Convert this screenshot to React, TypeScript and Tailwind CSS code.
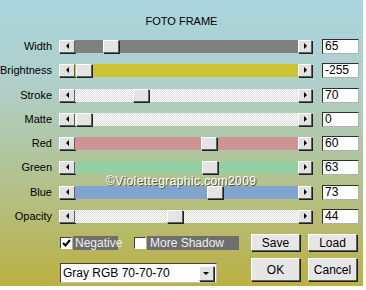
import React from "react";

type Row = { label: string; value: string; thumb: number; track: string };

// thumb = left offset of the thumb inside the track area (px)
const rows: Row[] = [
	{ label: "Width", value: "65", thumb: 28, track: "bg-[#808080]" },
	{ label: "Brightness", value: "-255", thumb: 1, track: "bg-[#cdc431]" },
	{ label: "Stroke", value: "70", thumb: 58, track: "dither" },
	{ label: "Matte", value: "0", thumb: 1, track: "dither" },
	{ label: "Red", value: "60", thumb: 126, track: "bg-[#cc9494]" },
	{ label: "Green", value: "63", thumb: 127, track: "bg-[#94d0a4]" },
	{ label: "Blue", value: "73", thumb: 132, track: "bg-[#80a4cc]" },
	{ label: "Opacity", value: "44", thumb: 92, track: "dither" },
];

const raised = "border border-t-white border-l-white border-r-[#606060] border-b-[#606060] shadow-[1px_1px_0_#202020]";

function Arrow({ dir }: { dir: "left" | "right" | "down" }) {
	const pts = dir === "left" ? "4,0 4,6 1,3" : dir === "right" ? "1,0 1,6 4,3" : "0,1 6,1 3,4";
	return (
		<svg width={dir === "down" ? 7 : 5} height={dir === "down" ? 5 : 7} viewBox={dir === "down" ? "0 0 7 5" : "0 0 5 7"}>
			<polygon points={pts} fill="#000" />
		</svg>
	);
}

function Slider({ row }: { row: Row }) {
	const dither = row.track === "dither";
	return (
		<div className="flex h-[13px] w-[253px]">
			<div className={`flex h-[13px] w-[16px] shrink-0 items-center justify-center bg-[#e2e2e2] ${raised}`}>
				<Arrow dir="left" />
			</div>
			<div
				className={`relative h-[13px] flex-1 ${
					dither ? "bg-[repeating-conic-gradient(#dcdcdc_0_25%,#ffffff_0_50%)] bg-[length:2px_2px]" : row.track
				}`}
			>
				<div className={`absolute top-0 h-[13px] w-[16px] bg-[#e4e4e4] ${raised}`} style={{ left: row.thumb }} />
			</div>
			<div className={`flex h-[13px] w-[14px] shrink-0 items-center justify-center bg-[#e2e2e2] ${raised}`}>
				<Arrow dir="right" />
			</div>
		</div>
	);
}

function Button({ label, tall }: { label: string; tall?: boolean }) {
	return (
		<div
			className={`flex w-[49px] items-center justify-center bg-[#e6e6e6] text-[12px] text-black ${raised} ${
				tall ? "h-[23px]" : "h-[17px]"
			}`}
		>
			{label}
		</div>
	);
}

export default function App() {
	return (
		<div className="h-[290px] w-[366px] bg-white font-['Liberation_Sans',Arial,sans-serif]">
			<div className="relative flex h-[286px] w-[363px] flex-col bg-[linear-gradient(to_bottom,#a9d6de_0%,#b0cfc8_30%,#b1c59d_55%,#b6bb70_78%,#bbb042_100%)]">
				<div className="pt-[15px] text-center text-[11px] leading-[13px] text-black">FOTO FRAME</div>

				<div className="mt-[12px] flex flex-col gap-[11.3px]">
					{rows.map((row) => (
						<div key={row.label} className="flex h-[13px] items-center">
							<div className="w-[53px] pr-[1px] text-right text-[11px] leading-[13px] text-black">{row.label}</div>
							<div className="ml-[6px]">
								<Slider row={row} />
							</div>
							<div className="ml-[10px] flex h-[15px] w-[37px] items-center border border-t-[#303030] border-l-[#303030] border-r-[#b0b0b0] border-b-[#b0b0b0] bg-white pl-[2px] text-[12px] leading-[13px] text-black">
								{row.value}
							</div>
						</div>
					))}
				</div>

				<div className="mt-[11px] flex">
					<div className="ml-[60px] flex w-[191px] shrink-0 flex-col">
						<div className="mt-[2px] flex h-[14px] items-center">
							<div className="flex h-[12px] w-[12px] items-center justify-center border border-t-[#404040] border-l-[#404040] border-r-white border-b-white bg-white">
								<svg width="9" height="8" viewBox="0 0 9 8">
									<polyline points="1,4 3.5,6.5 8,1" fill="none" stroke="#000" strokeWidth="2" />
								</svg>
							</div>
							<div className="ml-[1px] flex h-[14px] w-[45px] items-center bg-[#6e6e6e] pl-[2px] text-[12px] text-[#eeeeee]">
								Negative
							</div>
							<div className="ml-[16px] h-[12px] w-[12px] border border-t-[#404040] border-l-[#404040] border-r-white border-b-white bg-white" />
							<div className="ml-[1px] flex h-[14px] w-[92px] items-center bg-[#6e6e6e] pl-[3px] text-[12px] text-[#eeeeee]">
								More Shadow
							</div>
						</div>
						<div className="mt-[13px] flex h-[20px] w-[157px] items-center border border-t-[#404040] border-l-[#404040] border-r-[#c0c0c0] border-b-[#c0c0c0] bg-white pl-[2px]">
							<span className="flex-1 text-[12px] text-black">Gray RGB 70-70-70</span>
							<div className={`mr-[2px] flex h-[15px] w-[15px] items-center justify-center bg-[#e2e2e2] ${raised}`}>
								<Arrow dir="down" />
							</div>
						</div>
					</div>
					<div className="flex flex-col">
						<div className="flex gap-[8px]">
							<Button label="Save" />
							<Button label="Load" />
						</div>
						<div className="mt-[7px] flex gap-[8px]">
							<Button label="OK" tall />
							<Button label="Cancel" tall />
						</div>
					</div>
				</div>

				<div className="absolute left-[106px] top-[174px] text-[12px] leading-[14px] tracking-[0.4px] text-white [text-shadow:1px_1px_0_#505040]">
					©Violettegraphic.com2009
				</div>
			</div>
		</div>
	);
}
